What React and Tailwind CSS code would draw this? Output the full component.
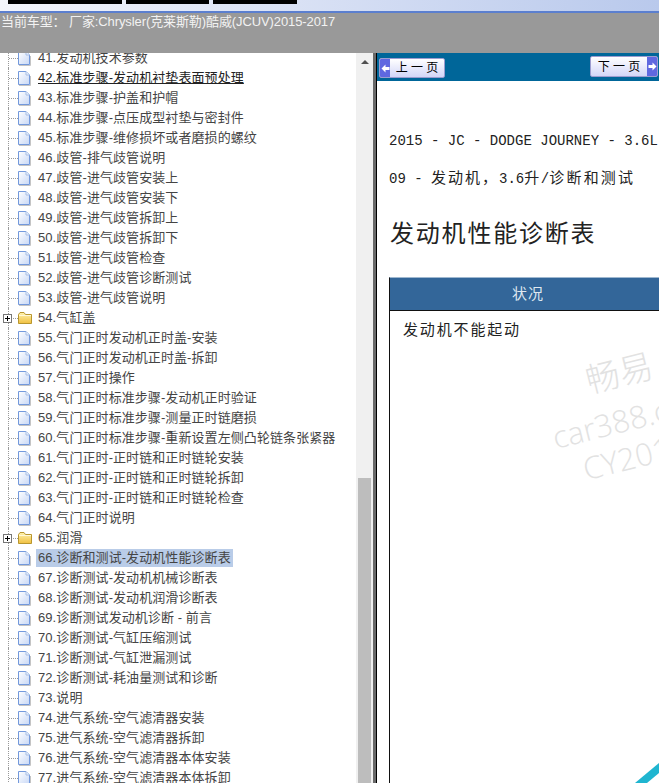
import React from "react";

const rows = [
  "41.发动机技术参数",
  "42.标准步骤-发动机衬垫表面预处理",
  "43.标准步骤-护盖和护帽",
  "44.标准步骤-点压成型衬垫与密封件",
  "45.标准步骤-维修损坏或者磨损的螺纹",
  "46.歧管-排气歧管说明",
  "47.歧管-进气歧管安装上",
  "48.歧管-进气歧管安装下",
  "49.歧管-进气歧管拆卸上",
  "50.歧管-进气歧管拆卸下",
  "51.歧管-进气歧管检查",
  "52.歧管-进气歧管诊断测试",
  "53.歧管-进气歧管说明",
  "54.气缸盖",
  "55.气门正时发动机正时盖-安装",
  "56.气门正时发动机正时盖-拆卸",
  "57.气门正时操作",
  "58.气门正时标准步骤-发动机正时验证",
  "59.气门正时标准步骤-测量正时链磨损",
  "60.气门正时标准步骤-重新设置左侧凸轮链条张紧器",
  "61.气门正时-正时链和正时链轮安装",
  "62.气门正时-正时链和正时链轮拆卸",
  "63.气门正时-正时链和正时链轮检查",
  "64.气门正时说明",
  "65.润滑",
  "66.诊断和测试-发动机性能诊断表",
  "67.诊断测试-发动机机械诊断表",
  "68.诊断测试-发动机润滑诊断表",
  "69.诊断测试发动机诊断 - 前言",
  "70.诊断测试-气缸压缩测试",
  "71.诊断测试-气缸泄漏测试",
  "72.诊断测试-耗油量测试和诊断",
  "73.说明",
  "74.进气系统-空气滤清器安装",
  "75.进气系统-空气滤清器拆卸",
  "76.进气系统-空气滤清器本体安装",
  "77.进气系统-空气滤清器本体拆卸",
];

const DocIcon = () => (
  <svg width="14" height="16" viewBox="0 0 14 16" className="shrink-0">
    <defs>
      <linearGradient id="docFill" x1="0" y1="0" x2="1" y2="1">
        <stop offset="0" stopColor="#ffffff" />
        <stop offset="1" stopColor="#c8d8f6" />
      </linearGradient>
    </defs>
    <path d="M0.5 1.5H8L11.5 5V14.5H0.5Z" fill="url(#docFill)" stroke="#7399dc" />
    <path d="M8 1.5V5H11.5" fill="#e8effc" stroke="#a9c0e6" />
    <path d="M1 15.5H12.5V6" fill="none" stroke="#c4c4c4" />
  </svg>
);

const FolderIcon = () => (
  <svg width="15" height="14" viewBox="0 0 15 14" className="shrink-0">
    <defs>
      <linearGradient id="folderFill" x1="0" y1="0" x2="0" y2="1">
        <stop offset="0" stopColor="#fff3b0" />
        <stop offset="1" stopColor="#f0c040" />
      </linearGradient>
    </defs>
    <path d="M0.5 3.5L2 1.5H6L7.5 3.5H13.5V12.5H0.5Z" fill="url(#folderFill)" stroke="#b8962e" />
    <path d="M1 4.5H13" stroke="#fff8d8" />
  </svg>
);

const TreeRow = ({ label }) => {
  const isFolder = label === "54.气缸盖" || label === "65.润滑";
  const isSelected = label.startsWith("66.");
  const isHover = label.startsWith("42.");
  return (
    <div className="flex h-5 items-center">
      <div className="relative ml-2 flex h-5 w-[10px] shrink-0 items-center border-l border-dotted border-[#999]">
        <div className="w-[9px] border-t border-dotted border-[#999]" />
        {isFolder && (
          <div className="absolute left-[-6px] top-[6px] flex h-[9px] w-[9px] items-center justify-center border border-[#777] bg-white">
            <div className="absolute h-[1px] w-[5px] bg-black" />
            <div className="absolute h-[5px] w-[1px] bg-black" />
          </div>
        )}
      </div>
      <div className="flex w-[15px] shrink-0">{isFolder ? <FolderIcon /> : <DocIcon />}</div>
      <span
        className={`ml-[3px] whitespace-nowrap px-[2px] text-[13px] leading-[18px] tracking-[0.08px] ${
          isSelected ? "bg-[#b9cce8] text-[#444]" : isHover ? "text-[#222] underline" : "text-[#444]"
        }`}
      >
        {label}
      </span>
    </div>
  );
};

const PageButton = ({ dir, label }) => {
  const isPrev = dir === "prev";
  return (
    <div
      className={`flex items-stretch overflow-hidden rounded-[2px] border border-[#9c9ccf] bg-gradient-to-b from-[#ffffff] to-[#d3d6f7] ${
        isPrev ? "mt-[5px] h-[20px] w-[66px]" : "mt-[3px] h-[21px] w-[68px] flex-row-reverse"
      }`}
    >
      <div className="flex w-[10px] shrink-0 items-center justify-center bg-[#5f68e0]">
        <svg width="9" height="9" viewBox="0 0 9 9">
          <path d={isPrev ? "M0.5 4.5L4.5 0.5V3H8.5V6H4.5V8.5Z" : "M8.5 4.5L4.5 0.5V3H0.5V6H4.5V8.5Z"} fill="#fff" />
        </svg>
      </div>
      <div className="flex flex-1 items-center justify-center whitespace-pre text-[12px] text-black">{label}</div>
    </div>
  );
};

export default function App() {
  return (
    <div className="flex h-[783px] w-[659px] flex-col overflow-hidden bg-white [font-family:'Liberation_Sans','Noto_Sans_CJK_SC',sans-serif]">
      {/* top strip */}
      <div className="flex h-[11px] shrink-0 items-start gap-[4px] bg-gradient-to-r from-[#f4f5fb] to-[#b9c9ec] pl-2">
        <div className="h-1 w-[114px] bg-black" />
        <div className="h-1 w-[83px] bg-black" />
        <div className="h-1 w-[84px] bg-black" />
      </div>
      <div className="h-[2px] shrink-0 bg-[#5b7fcf]" />
      <div className="h-[40px] shrink-0 whitespace-nowrap bg-[#999999] pl-[1px] pt-[1px] text-[13px] leading-[15px] tracking-[-0.1px] text-[#f2f2f2]">
        当前车型： 厂家:Chrysler(克莱斯勒)酷威(JCUV)2015-2017
      </div>

      <div className="flex min-h-0 flex-1">
        {/* tree */}
        <div className="w-[356px] shrink-0 overflow-hidden">
          <div className="-mt-[5px]">
            {rows.map((label) => (
              <TreeRow key={label} label={label} />
            ))}
          </div>
        </div>

        {/* scrollbar */}
        <div className="flex w-[17px] shrink-0 flex-col bg-[#f0f0f0]">
          <div className="flex h-[425px] shrink-0 justify-center pt-[7px]">
            <div className="h-0 w-0 border-x-[4px] border-b-[4px] border-x-transparent border-b-[#505050]" />
          </div>
          <div className="mx-[2px] flex-1 bg-[#bdbdbd]" />
        </div>

        {/* splitter */}
        <div className="w-[3px] shrink-0 bg-[#696969]" />
        <div className="w-[1px] shrink-0 bg-black" />

        {/* document */}
        <div className="relative min-w-0 flex-1 overflow-hidden">
          <div className="flex h-[28px] justify-between bg-[#006699] pl-[2px] pr-[1px]">
            <PageButton dir="prev" label="上 一 页" />
            <PageButton dir="next" label="下 一 页" />
          </div>

          <div className="w-[400px] pl-[12px] text-[#222]">
            <p className="mt-[51px] whitespace-nowrap text-[14px] leading-[18px] [font-family:'Liberation_Mono','Noto_Sans_CJK_SC',monospace]">
              2015 - JC - DODGE JOURNEY - 3.6L
            </p>
            <p className="mt-[20px] whitespace-nowrap text-[14px] leading-[18px] [font-family:'Liberation_Mono','Noto_Sans_CJK_SC',monospace]">
              09 - <span className="text-[15px] tracking-[2px]">发动机，</span>3.6
              <span className="text-[15px] tracking-[1.6px]">升</span>/
              <span className="text-[15px] tracking-[2.2px]">诊断和测试</span>
            </p>
            <h1 className="ml-[1px] mt-[29px] text-[24px] font-normal leading-[32px] tracking-[1.8px] text-[#222]">发动机性能诊断表</h1>
            <div className="mt-[27px] h-[520px] border-l border-t border-l-[#111] border-t-[#9fb8d0]">
              <div className="flex h-[32px] items-center justify-center bg-[#336699] pr-[16px] text-[15px] tracking-[1px] text-[#dfe8f0]">
                <span className="w-[276px] text-center">状况</span>
                <span className="flex-1" />
              </div>
              <div className="border-t border-[#111] pl-[13px] pt-[9px] text-[15px] leading-[20px] tracking-[1.85px] text-[#222]">
                发动机不能起动
              </div>
            </div>
          </div>

          {/* watermark */}
          <div className="absolute left-[162px] top-[329px] w-[200px] origin-top-left -rotate-[14deg] whitespace-nowrap text-[31px] font-light leading-[38px] text-[#e2e2e2] [font-family:'Open_Sans','Noto_Sans_CJK_SC',sans-serif]">
            <div className="-mt-[9px] mb-[9px] pl-[46px] text-[34px]">畅易</div>
            <div>car388.com</div>
            <div className="pl-[22px]">CY2017</div>
          </div>
          <svg width="24" height="20" viewBox="0 0 24 20" className="absolute bottom-0 right-0">
            <path d="M0 20L24 0V10L12 20Z" fill="#1fb5d0" />
          </svg>
        </div>
      </div>
    </div>
  );
}
